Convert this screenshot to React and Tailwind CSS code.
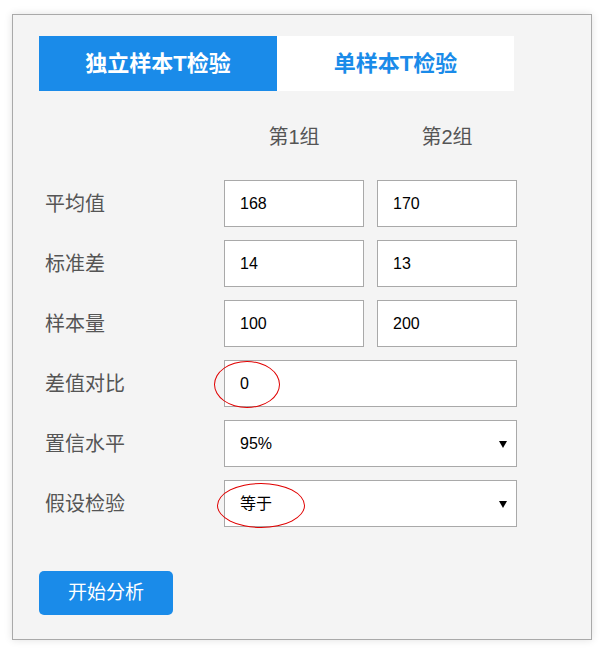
import React from 'react';

const font = { fontFamily: '"Liberation Sans", "Noto Sans CJK SC", sans-serif' };

const Field = ({ value, select, wide, children }) => (
  <div
    className={`relative h-[47px] bg-white border border-[#a9a9a9] flex items-center justify-between pl-[15px] pr-[9px] text-[16px] text-black ${wide ? 'col-span-2' : ''}`}
  >
    <span>{value}</span>
    {select && (
      <svg width="8" height="8" viewBox="0 0 8 8">
        <path d="M0 1 L8 1 L4 8 Z" fill="#000" />
      </svg>
    )}
    {children}
  </div>
);

const Label = ({ children }) => (
  <div className="h-[47px] flex items-center pl-[6px] text-[20px] text-[#555]">{children}</div>
);

const App = () => {
  return (
    <div className="min-h-screen bg-white pt-[14px] pl-[12px]" style={font}>
      <div className="w-[580px] h-[626px] border border-[#a9a9a9] bg-[#f4f4f4] shadow-[0_0_8px_rgba(0,0,0,0.12)] pl-[26px] pt-[21px]">
        <div className="flex w-[475px] h-[55px]">
          <div className="w-[238px] bg-[#1a8be9] text-white text-[22px] font-bold flex items-center justify-center">
            独立样本T检验
          </div>
          <div className="w-[237px] bg-white text-[#1a8be9] text-[22px] font-bold flex items-center justify-center">
            单样本T检验
          </div>
        </div>

        <div className="grid grid-cols-[172px_140px_140px] gap-x-[13px] mt-[30px] h-[32px] text-[20px] text-[#555]">
          <div />
          <div className="flex items-center justify-center">第1组</div>
          <div className="flex items-center justify-center">第2组</div>
        </div>

        <div className="grid grid-cols-[172px_140px_140px] gap-x-[13px] gap-y-[13px] mt-[27px]">
          <Label>平均值</Label>
          <Field value="168" />
          <Field value="170" />

          <Label>标准差</Label>
          <Field value="14" />
          <Field value="13" />

          <Label>样本量</Label>
          <Field value="100" />
          <Field value="200" />

          <Label>差值对比</Label>
          <Field value="0" wide>
            <div className="absolute left-[-11px] top-[0px] w-[66px] h-[47px] rounded-[50%] border-[1.5px] border-[#e00000]" />
          </Field>

          <Label>置信水平</Label>
          <Field value="95%" wide select />

          <Label>假设检验</Label>
          <Field value="等于" wide select>
            <div className="absolute left-[-8px] top-[2px] w-[88px] h-[45px] rounded-[50%] border-[1.5px] border-[#e00000]" />
          </Field>
        </div>

        <button className="mt-[44px] w-[134px] h-[44px] rounded-[5px] bg-[#1a8be9] text-white text-[19px] flex items-center justify-center">
          开始分析
        </button>
      </div>
    </div>
  );
};

export default App;
